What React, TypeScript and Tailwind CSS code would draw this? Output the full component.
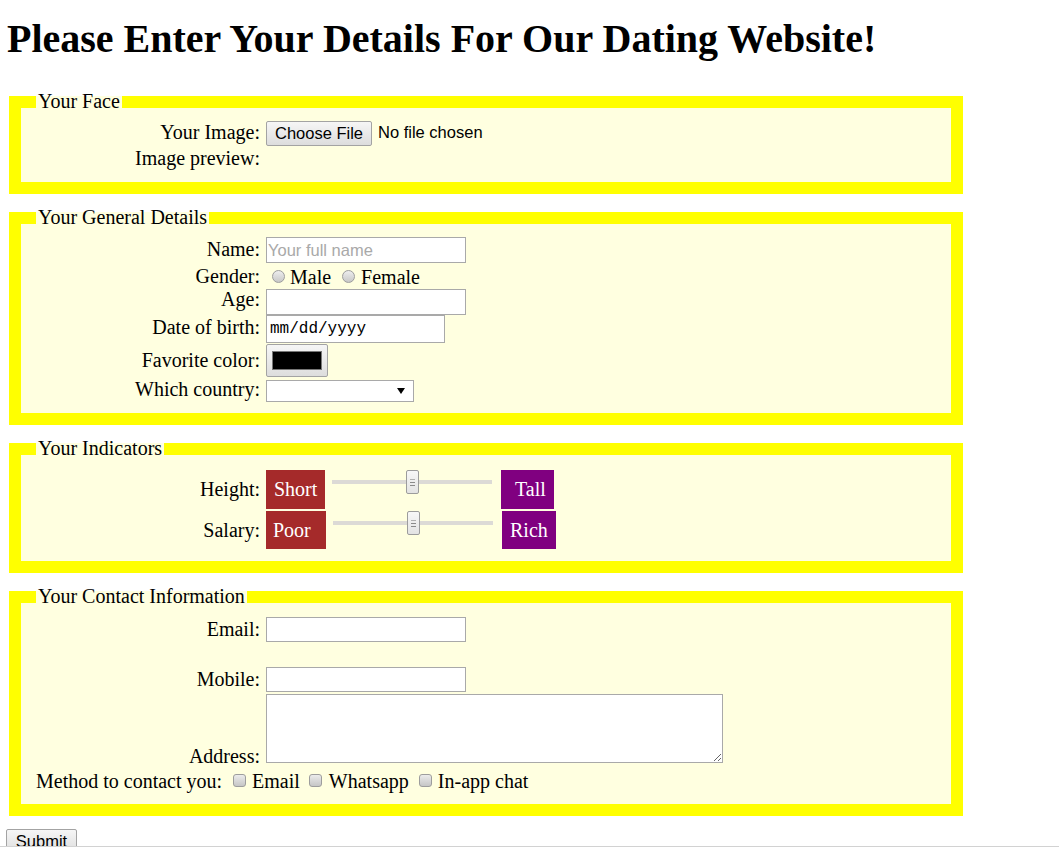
import { ReactNode } from "react";

// shared bits for the fake native controls
const sans = "font-['Liberation_Sans',Arial,sans-serif] text-[16.5px]";
const box = "border border-[#a9a9a9] bg-white";

function Fieldset({
  title,
  className,
  children,
}: {
  title: string;
  className: string;
  children: ReactNode;
}) {
  return (
    <fieldset
      className={`ml-[9px] w-[954px] border-[12px] border-[#ffff00] bg-[#ffffe0] px-[15px] ${className}`}
    >
      <legend className="px-[2px] leading-[23px]">{title}</legend>
      {children}
    </fieldset>
  );
}

function Row({
  label,
  className,
  labelClass = "",
  children,
}: {
  label: string;
  className: string;
  labelClass?: string;
  children?: ReactNode;
}) {
  return (
    <div className={`grid grid-cols-[224px_1fr] items-center gap-x-[6px] ${className}`}>
      <span className={`text-right leading-[23px] ${labelClass}`}>{label}</span>
      <div className="flex items-center">{children}</div>
    </div>
  );
}

function Radio({ className }: { className: string }) {
  return (
    <span
      className={`inline-block h-[13px] w-[13px] shrink-0 rounded-full border border-[#9d9d9d] bg-linear-to-b from-[#eeeeee] to-[#c8c8c8] ${className}`}
    />
  );
}

function Checkbox({ className }: { className: string }) {
  return (
    <span
      className={`inline-block h-[13px] w-[13px] shrink-0 rounded-[3px] border border-[#9d9d9d] bg-linear-to-b from-[#ececec] to-[#c6c6c6] ${className}`}
    />
  );
}

function Slider({ className }: { className: string }) {
  return (
    <div className={`relative h-[24px] w-[160px] shrink-0 self-start ${className}`}>
      <div className="absolute left-0 right-0 top-[10px] h-[4px] bg-[#dcdad6]" />
      <div className="absolute left-[74px] top-0 flex h-[24px] w-[13px] flex-col items-center justify-center gap-[2px] rounded-[2px] border border-[#9c9c9c] bg-linear-to-b from-[#f7f7f7] to-[#e3e3e3]">
        <span className="h-px w-[5px] bg-[#b0b0b0]" />
        <span className="h-px w-[5px] bg-[#8a8a8a]" />
        <span className="h-px w-[5px] bg-[#8a8a8a]" />
      </div>
    </div>
  );
}

export default function App() {
  return (
    <div className="relative h-[849px] overflow-hidden bg-white font-['Liberation_Serif','Times_New_Roman',serif] text-[20px] leading-[23px] text-black">
      <h1 className="ml-[7px] mt-[16px] text-[40px] font-bold leading-[46px]">
        Please Enter Your Details For Our Dating Website!
      </h1>

      <form className="mt-[28px]">
        {/* Face */}
        <Fieldset title="Your Face" className="pb-[12px] pt-[7px]">
          <Row label="Your Image:" className="h-[26px]" labelClass="pb-[2px]">
            <button
              type="button"
              className={`h-[25px] w-[106px] rounded-[2px] border border-[#a3a3a3] bg-linear-to-b from-[#f6f6f6] to-[#dddddd] leading-[23px] ${sans}`}
            >
              Choose File
            </button>
            <span className={`ml-[6px] pb-[2px] leading-[23px] ${sans}`}>No file chosen</span>
          </Row>
          <Row label="Image preview:" className="h-[24px]" />
        </Fieldset>

        {/* General */}
        <Fieldset title="Your General Details" className="mt-[12px] flex flex-col gap-y-[1px] pb-[13px] pt-[8px]">
          <Row label="Name:" className="h-[26px]" labelClass="pb-[2px]">
            <input
              placeholder="Your full name"
              className={`h-[26px] w-[200px] px-[1px] outline-none placeholder:text-[#a9a9a9] ${box} ${sans}`}
            />
          </Row>
          <Row label="Gender:" className="h-[23px]">
            <Radio className="ml-[6px]" />
            <span className="ml-[5px] pt-[2px]">Male</span>
            <Radio className="ml-[11px]" />
            <span className="ml-[6px] pt-[2px]">Female</span>
          </Row>
          <Row label="Age:" className="h-[26px]" labelClass="pb-[4px]">
            <input className={`h-[26px] w-[200px] px-[1px] outline-none ${box} ${sans}`} />
          </Row>
          <Row label="Date of birth:" className="h-[28px]" labelClass="pb-[4px]">
            <div
              className={`flex h-[28px] w-[179px] items-center pl-[3px] font-['Liberation_Mono',monospace] text-[16px] ${box}`}
            >
              mm/dd/yyyy
            </div>
          </Row>
          <Row label="Favorite color:" className="h-[33px]">
            <div className="flex h-[33px] w-[62px] items-center justify-center rounded-[2px] border border-[#a3a3a3] bg-linear-to-b from-[#f6f6f6] to-[#dddddd]">
              <div className="h-[19px] w-[50px] border border-[#777777] bg-black" />
            </div>
          </Row>
          <Row label="Which country:" className="h-[22px]" labelClass="pb-[2px]">
            <div className={`flex h-[22px] w-[148px] items-center justify-end pr-[8px] ${box}`}>
              <svg width="8" height="6" viewBox="0 0 8 6">
                <polygon points="0,0 8,0 4,6" fill="#000" />
              </svg>
            </div>
          </Row>
        </Fieldset>

        {/* Indicators */}
        <Fieldset title="Your Indicators" className="mt-[12px] flex flex-col gap-y-[2px] pb-[12px] pt-[10px]">
          <Row label="Height:" className="h-[39px]">
            <span className="h-[39px] w-[59px] shrink-0 bg-[#a52a2a] pl-[8px] leading-[39px] text-white">Short</span>
            <Slider className="ml-[7px]" />
            <span className="ml-[9px] h-[39px] w-[53px] shrink-0 bg-[#800080] pl-[14px] leading-[39px] text-white">Tall</span>
          </Row>
          <Row label="Salary:" className="h-[38px]">
            <span className="h-[38px] w-[60px] shrink-0 bg-[#a52a2a] pl-[7px] leading-[38px] text-white">Poor</span>
            <Slider className="ml-[7px]" />
            <span className="ml-[9px] h-[38px] w-[54px] shrink-0 bg-[#800080] pl-[8px] leading-[38px] text-white">Rich</span>
          </Row>
        </Fieldset>

        {/* Contact */}
        <Fieldset title="Your Contact Information" className="mt-[12px] flex flex-col pb-[11px] pt-[9px]">
          <Row label="Email:" className="h-[25px]">
            <input type="email" className={`h-[25px] w-[200px] px-[1px] outline-none ${box} ${sans}`} />
          </Row>
          <div className="h-[25px]" />
          <Row label="Mobile:" className="h-[25px]">
            <input className={`h-[25px] w-[200px] px-[1px] outline-none ${box} ${sans}`} />
          </Row>
          <div className="mt-[2px] grid h-[74px] grid-cols-[224px_1fr] gap-x-[6px]">
            <span className="self-end text-right leading-[23px]">Address:</span>
            <textarea className={`h-[69px] w-[457px] self-start resize outline-none ${box} ${sans}`} />
          </div>
          <div className="flex h-[25px] items-center">
            <span className="pt-[2px]">Method to contact you:</span>
            <Checkbox className="ml-[11px]" />
            <span className="ml-[6px] pt-[2px]">Email</span>
            <Checkbox className="ml-[9px]" />
            <span className="ml-[7px] pt-[2px]">Whatsapp</span>
            <Checkbox className="ml-[10px]" />
            <span className="ml-[6px] pt-[2px]">In-app chat</span>
          </div>
        </Fieldset>

        <button
          type="submit"
          className={`ml-[6px] mt-[13px] h-[25px] w-[71px] rounded-[2px] border border-[#a3a3a3] bg-linear-to-b from-[#f6f6f6] to-[#dddddd] leading-[23px] ${sans}`}
        >
          Submit
        </button>
      </form>

      <div className="absolute inset-x-0 bottom-0 h-[3px] border-t border-[#d2d2d2] bg-white" />
    </div>
  );
}
